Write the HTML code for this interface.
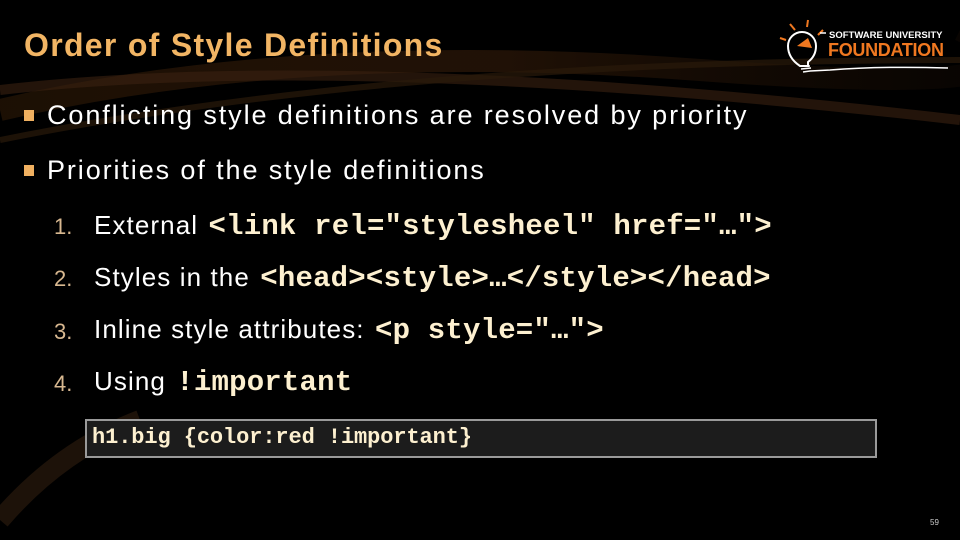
<!DOCTYPE html>
<html><head><meta charset="utf-8"><style>
html,body{margin:0;padding:0}
body{width:960px;height:540px;overflow:hidden;position:relative;background:#000;font-family:"Liberation Sans",sans-serif;}
.bg{position:absolute;left:0;top:0}
.t{position:absolute;white-space:nowrap}
.title{left:24px;top:27px;font-size:32px;font-weight:bold;color:#f2b564;letter-spacing:1.3px}
.b{font-size:27px;color:#fff;letter-spacing:1.9px}
.sq{display:inline-block;width:10px;height:11px;background:#f0b060;margin-right:13px;vertical-align:3px}
.n{position:absolute;left:54px;font-size:22px;color:#d8b890}
.li{font-size:26px;color:#fff;left:94px;letter-spacing:1.1px}
code{font-family:"Liberation Mono",monospace;font-weight:bold;color:#fdf0d0;font-size:29px;letter-spacing:0.2px;margin-left:2px}
.box{position:absolute;left:85px;top:419px;width:788px;height:35px;border:2px solid #9a9a9a;background:#1c1c1c;box-sizing:content-box}
.box span{position:absolute;left:5px;top:4px;font-family:"Liberation Mono",monospace;font-weight:bold;color:#fdf0d0;font-size:22px;letter-spacing:-0.1px}
</style></head><body>
<svg class="bg" width="960" height="540">
<defs>
<linearGradient id="g1" x1="0" x2="1"><stop offset="0" stop-color="#3a2008" stop-opacity="0.8"/><stop offset="0.5" stop-color="#5a3010" stop-opacity="0.6"/><stop offset="1" stop-color="#2a1608" stop-opacity="0.3"/></linearGradient>
</defs>
<path d="M0 110 Q300 40 700 70 T960 30" stroke="url(#g1)" stroke-width="22" fill="none" opacity="0.6"/>
<path d="M0 90 Q350 50 960 120" stroke="#3a2210" stroke-width="10" fill="none" opacity="0.6"/>
<path d="M0 140 Q400 60 960 60" stroke="#2a1a0a" stroke-width="6" fill="none" opacity="0.7"/>
<path d="M0 520 Q60 450 140 420" stroke="#3a2412" stroke-width="20" fill="none" opacity="0.5"/>
<g stroke="#f07820" stroke-width="2" fill="none">
<line x1="790" y1="24" x2="795" y2="30"/><line x1="808" y1="20" x2="807" y2="27"/><line x1="780" y1="38" x2="786" y2="40"/><line x1="823" y1="30" x2="818" y2="35"/>
</g>
<path d="M800 66 Q788 58 788 46 A14 14 0 0 1 816 46 Q816 56 808 62 L808 66 Z" stroke="#fff" stroke-width="2" fill="none"/>
<path d="M797 46 L808 38 L812 48 Z" fill="#f07820"/>
<path d="M802 66 L810 66 M801 69 L811 68 M803 72 L810 71 L830 70 Q880 66 948 68" stroke="#fff" stroke-width="1.5" fill="none"/>
<line x1="820" y1="33" x2="826" y2="33" stroke="#fff" stroke-width="1.5"/>
</svg>
<div class="t" style="left:829px;top:30px;font-size:9.5px;font-weight:bold;color:#fff;letter-spacing:0">SOFTWARE UNIVERSITY</div>
<div class="t" style="left:828px;top:40px;font-size:18px;font-weight:bold;color:#f07820;letter-spacing:-0.3px">FOUNDATION</div>

<div class="t title">Order of Style Definitions</div>
<div class="t b" style="left:24px;top:100px"><span class="sq"></span>Conflicting style definitions are resolved by priority</div>
<div class="t b" style="left:24px;top:155px"><span class="sq"></span>Priorities of the style definitions</div>

<div class="t n" style="top:214px">1.</div>
<div class="t li" style="top:210px">External <code>&lt;link rel="stylesheel" href="…"&gt;</code></div>
<div class="t n" style="top:266px">2.</div>
<div class="t li" style="top:262px">Styles in the <code>&lt;head&gt;&lt;style&gt;…&lt;/style&gt;&lt;/head&gt;</code></div>
<div class="t n" style="top:319px">3.</div>
<div class="t li" style="top:314px">Inline style attributes: <code>&lt;p style="…"&gt;</code></div>
<div class="t n" style="top:371px">4.</div>
<div class="t li" style="top:366px">Using <code>!important</code></div>

<div class="box"><span>h1.big {color:red !important}</span></div>
<div class="t" style="left:930px;top:518px;font-size:8px;color:#ccc">59</div>
</body></html>
